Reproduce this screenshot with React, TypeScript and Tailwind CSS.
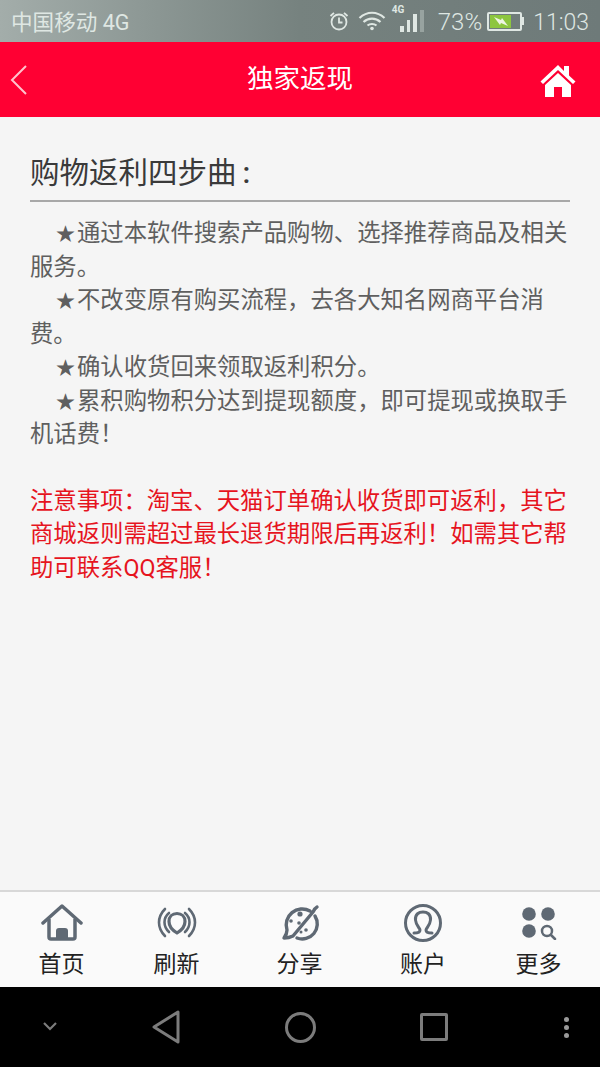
const cjk = "font-['Roboto','Noto_Sans_CJK_SC',sans-serif]";

function StatusBar() {
  return (
    <div className="h-[42px] flex items-center justify-between px-[11px] bg-gradient-to-r from-[#a3adaa] via-[#76827f] to-[#6e7a79] text-[#dfe7e3]">
      <span className="text-[21.6px] leading-none mt-[3px]">中国移动 4G</span>
      <div className="flex items-center">
        <svg width="22" height="22" viewBox="0 0 22 22" fill="none" stroke="#dfe7e3" strokeWidth="1.8">
          <circle cx="11" cy="12" r="7.5" />
          <path d="M11 7.5V12.5H14.5M2.5 6L6 2.800M19.5 6L16 2.800" />
        </svg>
        <svg className="ml-[8px]" width="28" height="22" viewBox="0 0 28 22" fill="none" stroke="#dfe7e3" strokeWidth="2.2">
          <path d="M1.5 8C9 1 19 1 26.500 8M5.500 12C10.500 7.500 17.500 7.500 22.500 12M9.500 15.500C12 13.500 16 13.500 18.500 15.500" />
          <circle cx="14" cy="18.5" r="1.8" fill="#dfe7e3" stroke="none" />
        </svg>
        <div className="relative ml-[6px] w-[32px] h-[24px] flex items-end gap-[3px] pl-[8px] mt-[-2px]">
          <span className="absolute left-0 top-[-3px] text-[10px] font-bold leading-none">4G</span>
          <span className="w-[4px] h-[6px] bg-[#dfe7e3]" />
          <span className="w-[4px] h-[12px] bg-[#dfe7e3]" />
          <span className="w-[4px] h-[18px] bg-[#dfe7e3]" />
          <span className="w-[4px] h-[22px] bg-[#98a3a0]" />
        </div>
        <span className="ml-[14px] text-[24px] font-light leading-none mt-[2px]">73%</span>
        <div className="ml-[5px] w-[35px] h-[19px] border-2 border-[#dfe7e3] rounded-[2px] p-[1px] flex">
          <div className="w-[73%] bg-[#8dc63f] flex items-center justify-center">
            <svg width="16" height="11" viewBox="0 0 16 11">
              <path d="M1 1L8 4L9 2L15 10L8 7L7 9Z" fill="#eef5e2" />
            </svg>
          </div>
        </div>
        <div className="w-[2px] h-[8px] bg-[#dfe7e3]" />
        <span className="ml-[9px] text-[23px] font-light leading-none mt-[2px]">11:03</span>
      </div>
    </div>
  );
}

function Header() {
  return (
    <div className="h-[75px] bg-[#ff0033] flex items-center text-white">
      <div className="w-[100px] pl-[10px] flex">
        <svg width="18" height="32" viewBox="0 0 18 32" fill="none" stroke="#ffc2cd" strokeWidth="2">
          <path d="M16 2L2 16L16 30" />
        </svg>
      </div>
      <span className="flex-1 text-center text-[26.5px] leading-none">独家返现</span>
      <div className="w-[100px] pr-[24px] flex justify-end">
        <svg width="36" height="36" viewBox="0 0 36 36" fill="#fff">
          <path d="M18 3L0.5 19.500L3 22L18 8L33 22L35.500 19.500L29 13.500V4H24V9Z" />
          <path d="M18 11L5 23V35H14V25H22V35H31V23Z" />
        </svg>
      </div>
    </div>
  );
}

const steps = [
  "通过本软件搜索产品购物、选择推荐商品及相关服务。",
  "不改变原有购买流程，去各大知名网商平台消费。",
  "确认收货回来领取返利积分。",
  "累积购物积分达到提现额度，即可提现或换取手机话费！",
];

function Content() {
  return (
    <div className="flex-1 bg-[#f5f5f5] px-[30px] pt-[37px]">
      <h1 className="text-[29.5px] leading-[38px] font-normal text-[#3a3a3a] pb-[8px] border-b-2 border-[#a8a8a8]">
        购物返利四步曲<span className="ml-[6px] font-medium">:</span>
      </h1>
      <div className="mt-[15px] text-[23.35px] leading-[33.5px] text-[#5f5f5f]">
        {steps.map((s) => (
          <p key={s}>
            <span className="ml-[26px] mr-[2px] text-[19px] leading-none">★</span>
            {s}
          </p>
        ))}
      </div>
      <p className="mt-[33px] text-[23.35px] leading-[33.5px] text-[#e6141e]">
        注意事项：淘宝、天猫订单确认收货即可返利，其它商城返则需超过最长退货期限后再返利！如需其它帮助可联系QQ客服！
      </p>
    </div>
  );
}

const gray = "#5f6974";

function HomeIcon() {
  return (
    <svg width="42" height="38" viewBox="0 0 42 38" fill="none" stroke={gray} strokeWidth="3.5">
      <path d="M2 19L21 2L40 19" strokeLinejoin="round" strokeLinecap="round" />
      <path d="M8 15V33Q8 35 10 35H32Q34 35 34 33V15" />
      <path d="M15 35V27Q15 24 18 24H24Q27 24 27 27V35Z" fill={gray} stroke="none" />
    </svg>
  );
}

function BroadcastIcon() {
  return (
    <svg width="44" height="34" viewBox="0 0 44 34" fill="none" stroke={gray} strokeWidth="2.6" strokeLinecap="round">
      <path d="M22 27C17 24 14 20 14 15.500C14 10.500 17.500 7.500 22 7.500C26.500 7.500 30 10.500 30 15.500C30 20 27 24 22 27Z" strokeWidth="3.2" />
      <path d="M10 3C2 11 2 22 10 30M14 7C8 12 8 20 14 26M34 3C42 11 42 22 34 30M30 7C36 12 36 20 30 26" />
    </svg>
  );
}

function PlanetIcon() {
  return (
    <svg width="40" height="40" viewBox="0 0 40 40" fill="none" stroke={gray} strokeWidth="3.4" strokeLinecap="round" strokeLinejoin="round">
      <path d="M30 8A16 16 0 0 0 7 27Q7 31 4 35Q9 35 13 33L33 9Q35 5 37 4" />
      <path d="M35 13A15 15 0 0 1 17 35" />
      <circle cx="20" cy="11" r="2.600" fill={gray} stroke="none" />
      <circle cx="11" cy="18" r="1.800" fill={gray} stroke="none" />
      <circle cx="19" cy="20" r="1.800" fill={gray} stroke="none" />
      <circle cx="26" cy="27" r="1.800" fill={gray} stroke="none" />
      <circle cx="21" cy="29" r="1.500" fill={gray} stroke="none" />
    </svg>
  );
}

function AccountIcon() {
  return (
    <svg width="40" height="40" viewBox="0 0 40 40" fill="none" stroke={gray} strokeWidth="3" strokeLinecap="round">
      <circle cx="20" cy="20" r="17.5" />
      <path d="M11 30C14 30 17 30 17 27C17 25 13 23 12.500 17C12 11 16 9 20 9C24 9 28 11 27.500 17C27 23 23 25 23 27C23 30 26 30 29 30" />
    </svg>
  );
}

function MoreIcon() {
  return (
    <svg width="36" height="34" viewBox="0 0 36 34" fill={gray}>
      <circle cx="8" cy="8" r="6.800" />
      <circle cx="27" cy="8" r="6.800" />
      <circle cx="8" cy="25" r="6.800" />
      <circle cx="26" cy="25" r="5" fill="none" stroke={gray} strokeWidth="2.500" />
      <path d="M30 29L34 33" stroke={gray} strokeWidth="2.500" strokeLinecap="round" />
    </svg>
  );
}

const tabs = [
  { label: "首页", icon: <HomeIcon />, width: "w-[123px]" },
  { label: "刷新", icon: <BroadcastIcon />, width: "w-[107px]" },
  { label: "分享", icon: <PlanetIcon />, width: "w-[139px]" },
  { label: "账户", icon: <AccountIcon />, width: "w-[108px]" },
  { label: "更多", icon: <MoreIcon />, width: "w-[123px]" },
];

function TabBar() {
  return (
    <div className="h-[97px] bg-[#fafafa] border-t-2 border-[#d8d8d8] flex">
      {tabs.map((t) => (
        <div key={t.label} className={`${t.width} flex flex-col items-center`}>
          <div className="h-[48px] mt-[7px] flex items-center justify-center">{t.icon}</div>
          <span className="text-[23px] leading-none mt-[6px] text-[#222]">{t.label}</span>
        </div>
      ))}
    </div>
  );
}

function NavBar() {
  return (
    <div className="h-[80px] bg-black flex items-center">
      <svg className="ml-[42px] mt-[-2px]" width="16" height="10" viewBox="0 0 16 10" fill="none" stroke="#7c7c7c" strokeWidth="2.200">
        <path d="M2 2L8 8L14 2" />
      </svg>
      <svg className="ml-[94px]" width="28" height="34" viewBox="0 0 28 34" fill="none" stroke="#7c7c7c" strokeWidth="3" strokeLinejoin="round">
        <path d="M2 17L26 2V32Z" />
      </svg>
      <svg className="ml-[105px]" width="31" height="31" viewBox="0 0 31 31" fill="none" stroke="#7c7c7c" strokeWidth="3">
        <circle cx="15.500" cy="15.500" r="14" />
      </svg>
      <div className="ml-[104px] w-[28px] h-[28px] border-[3px] border-[#7c7c7c] rounded-[2px]" />
      <div className="ml-[116px] flex flex-col gap-[3px]">
        <span className="w-[5px] h-[5px] rounded-full bg-[#9a9a9a]" />
        <span className="w-[5px] h-[5px] rounded-full bg-[#9a9a9a]" />
        <span className="w-[5px] h-[5px] rounded-full bg-[#9a9a9a]" />
      </div>
    </div>
  );
}

export default function App() {
  return (
    <div className={`w-[600px] h-[1067px] flex flex-col overflow-hidden ${cjk}`}>
      <StatusBar />
      <Header />
      <Content />
      <TabBar />
      <NavBar />
    </div>
  );
}
